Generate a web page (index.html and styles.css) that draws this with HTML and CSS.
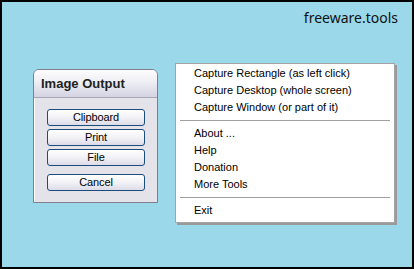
FILE: index.html
```html
<!DOCTYPE html>
<html lang="en">
<head>
	<link rel="stylesheet" href="styles.css">
	<meta charset="UTF-8">
	<title>freeware.tools - Screen Capture</title>
</head>
<body>
	<div id="frame">
		<div class="brand">freeware.tools</div>
		<div class="stage">
			<div class="dialog">
				<div class="dialog-title">Image Output</div>
				<div class="dialog-body">
					<button class="btn">Clipboard</button>
					<button class="btn">Print</button>
					<button class="btn">File</button>
					<button class="btn btn-cancel">Cancel</button>
				</div>
			</div>
			<ul class="menu">
				<li>Capture Rectangle (as left click)</li>
				<li>Capture Desktop (whole screen)</li>
				<li>Capture Window (or part of it)</li>
				<li class="sep"></li>
				<li>About ...</li>
				<li>Help</li>
				<li>Donation</li>
				<li>More Tools</li>
				<li class="sep"></li>
				<li>Exit</li>
			</ul>
		</div>
	</div>
</body>
</html>
```

FILE: styles.css
```css
html, body {
	margin: 0;
	padding: 0;
	width: 414px;
	height: 269px;
	overflow: hidden;
}
#frame {
	box-sizing: border-box;
	width: 414px;
	height: 269px;
	border: 2px solid #000;
	background: #9ad8ea;
}
.brand {
	font-family: "Noto Sans", sans-serif;
	font-size: 14px;
	line-height: 20px;
	color: #111;
	text-align: right;
	padding: 6px 14px 0 0;
}
.stage {
	display: flex;
	align-items: flex-start;
	margin-top: 35px;
	padding-left: 31px;
}
.dialog {
	box-sizing: border-box;
	width: 125px;
	height: 134px;
	margin-top: 6px;
	border: 1px solid #7e7e8c;
	border-radius: 6px 6px 0 0;
	background: #e4e3ea;
	box-shadow: inset 1px 1px 0 #fff;
}
.dialog-title {
	height: 27px;
	line-height: 27px;
	padding-left: 7px;
	font-family: "Liberation Sans", Arial, sans-serif;
	font-weight: bold;
	font-size: 13px;
	color: #222;
	border-radius: 5px 5px 0 0;
	border-bottom: 1px solid #a8a8b4;
	background: linear-gradient(to bottom, #fdfdfe 0%, #eeeef4 45%, #d4d3e3 100%);
}
.dialog-body {
	display: flex;
	flex-direction: column;
	gap: 3px;
	padding: 11px 0 0 13px;
}
.btn {
	box-sizing: border-box;
	width: 98px;
	height: 17px;
	padding: 0;
	border: 1px solid #1d4c7c;
	border-radius: 3px;
	background: linear-gradient(to bottom, #ffffff 0%, #f2f2f6 50%, #dcdbe8 100%);
	font-family: "Liberation Sans", Arial, sans-serif;
	font-size: 11px;
	letter-spacing: -0.1px;
	line-height: 15px;
	color: #000;
}
.btn-cancel {
	margin-top: 5px;
}
.menu {
	box-sizing: border-box;
	list-style: none;
	width: 220px;
	height: 160px;
	margin: 0 0 0 17px;
	padding: 1px 0 0 0;
	background: #fff;
	border: 1px solid #a4a4a4;
	box-shadow: 2px 2px 0 #9a9a9a;
	font-family: "Liberation Sans", Arial, sans-serif;
	font-size: 11px;
	color: #000;
}
.menu li {
	height: 17px;
	line-height: 17px;
	padding-left: 18px;
}
.menu li.sep {
	height: 1px;
	margin: 4px 4px;
	padding: 0;
	background: #a0a0a0;
}
```
